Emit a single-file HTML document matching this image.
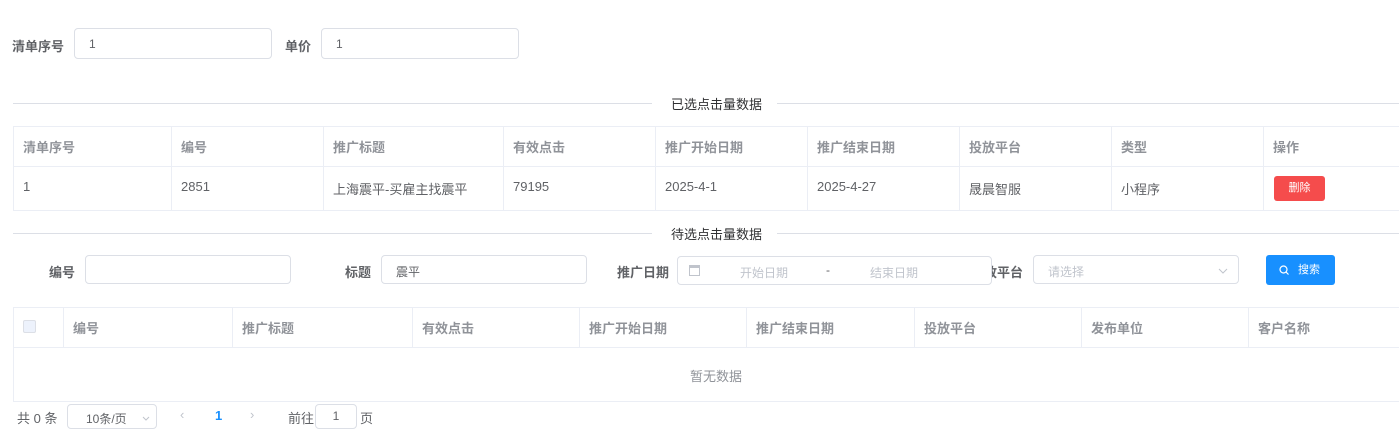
<!DOCTYPE html>
<html><head><meta charset="utf-8"><style>
*{box-sizing:border-box;margin:0;padding:0}
body{width:1399px;height:429px;overflow:hidden;background:#fff;font-family:"Liberation Sans","Noto Sans CJK SC",sans-serif;color:#606266;font-size:13px;position:relative}
.a{position:absolute}
.lbl{position:absolute;font-weight:bold;color:#606266;font-size:13px}
.inp{position:absolute;border:1px solid #dcdfe6;border-radius:4px;background:#fff;font-size:12px;color:#606266}
.hl{position:absolute;height:1px;background:#dcdfe6}
.vl{position:absolute;width:1px;background:#ebeef5}
.t{position:absolute;font-size:13px}
.th{color:#909399;font-weight:bold}
</style></head><body>
<div class="lbl" style="left:12px;top:36px">清单序号</div>
<div class="inp" style="left:74px;top:28px;width:198px;height:31px;padding:8px 14px">1</div>
<div class="lbl" style="left:285px;top:36px">单价</div>
<div class="inp" style="left:321px;top:28px;width:198px;height:31px;padding:8px 14px">1</div>

<div class="hl" style="left:13px;top:103px;width:639px"></div>
<div class="hl" style="left:777px;top:103px;width:622px"></div>
<div class="t" style="left:671px;top:94px;color:#303133">已选点击量数据</div>

<!-- table1 -->
<div class="a" style="left:13px;top:126px;width:1400px;height:85px;border:1px solid #ebeef5"></div>
<div class="hl" style="left:13px;top:166px;width:1386px;background:#ebeef5"></div>
<div class="vl" style="left:171px;top:126px;height:85px"></div>
<div class="vl" style="left:323px;top:126px;height:85px"></div>
<div class="vl" style="left:503px;top:126px;height:85px"></div>
<div class="vl" style="left:655px;top:126px;height:85px"></div>
<div class="vl" style="left:807px;top:126px;height:85px"></div>
<div class="vl" style="left:959px;top:126px;height:85px"></div>
<div class="vl" style="left:1111px;top:126px;height:85px"></div>
<div class="vl" style="left:1263px;top:126px;height:85px"></div>
<div class="t th" style="left:23px;top:137px">清单序号</div>
<div class="t th" style="left:181px;top:137px">编号</div>
<div class="t th" style="left:333px;top:137px">推广标题</div>
<div class="t th" style="left:513px;top:137px">有效点击</div>
<div class="t th" style="left:665px;top:137px">推广开始日期</div>
<div class="t th" style="left:817px;top:137px">推广结束日期</div>
<div class="t th" style="left:969px;top:137px">投放平台</div>
<div class="t th" style="left:1121px;top:137px">类型</div>
<div class="t th" style="left:1273px;top:137px">操作</div>
<div class="t" style="left:23px;top:179px">1</div>
<div class="t" style="left:181px;top:179px">2851</div>
<div class="t" style="left:333px;top:179px">上海震平-买雇主找震平</div>
<div class="t" style="left:513px;top:179px">79195</div>
<div class="t" style="left:665px;top:179px">2025-4-1</div>
<div class="t" style="left:817px;top:179px">2025-4-27</div>
<div class="t" style="left:969px;top:179px">晟晨智服</div>
<div class="t" style="left:1121px;top:179px">小程序</div>
<div class="a" style="left:1274px;top:176px;width:51px;height:25px;background:#f54c4c;border-radius:3px;color:#fff;font-size:11px;text-align:center;line-height:25px">删除</div>

<div class="hl" style="left:13px;top:233px;width:639px"></div>
<div class="hl" style="left:777px;top:233px;width:622px"></div>
<div class="t" style="left:671px;top:224px;color:#303133">待选点击量数据</div>

<!-- filters -->
<div class="lbl" style="left:49px;top:262px">编号</div>
<div class="inp" style="left:85px;top:255px;width:206px;height:29px"></div>
<div class="lbl" style="left:345px;top:262px">标题</div>
<div class="inp" style="left:381px;top:255px;width:206px;height:29px;padding:7px 14px">震平</div>
<div class="lbl" style="left:617px;top:262px">推广日期</div>
<div class="lbl" style="left:971px;top:262px">投放平台</div>
<div class="inp" style="left:677px;top:256px;width:315px;height:29px;color:#c0c4cc">
<div class="a" style="left:11px;top:8px;width:11px;height:11px;border:1px solid #c0c4cc;border-top-width:3px"></div>
<div class="a" style="left:62px;top:7px">开始日期</div>
<div class="a" style="left:148px;top:6px;color:#606266">-</div>
<div class="a" style="left:192px;top:7px">结束日期</div>
</div>
<div class="inp" style="left:1033px;top:255px;width:206px;height:29px;padding:7px 14px;color:#c0c4cc">请选择
<svg class="a" style="left:184px;top:12px" width="10" height="7"><path d="M1 1 L5 5 L9 1" stroke="#c0c4cc" fill="none"/></svg></div>
<div class="a" style="left:1266px;top:255px;width:69px;height:30px;background:#1890ff;border-radius:3px;color:#fff;font-size:11px;line-height:30px;padding-left:13px">
<svg class="a" style="left:13px;top:10px" width="10" height="10"><circle cx="4.5" cy="4.5" r="3.5" stroke="#fff" fill="none" stroke-width="1.2"/><path d="M7 7 L9.5 9.5" stroke="#fff" stroke-width="1.2"/></svg>
<span style="margin-left:19px">搜索</span></div>

<!-- table2 -->
<div class="a" style="left:13px;top:307px;width:1400px;height:95px;border:1px solid #ebeef5"></div>
<div class="hl" style="left:13px;top:347px;width:1386px;background:#ebeef5"></div>
<div class="vl" style="left:63px;top:307px;height:40px"></div>
<div class="vl" style="left:232px;top:307px;height:40px"></div>
<div class="vl" style="left:412px;top:307px;height:40px"></div>
<div class="vl" style="left:579px;top:307px;height:40px"></div>
<div class="vl" style="left:746px;top:307px;height:40px"></div>
<div class="vl" style="left:914px;top:307px;height:40px"></div>
<div class="vl" style="left:1081px;top:307px;height:40px"></div>
<div class="vl" style="left:1248px;top:307px;height:40px"></div>
<div class="a" style="left:23px;top:320px;width:13px;height:13px;border:1px solid #dcdfe6;border-radius:2px;background:#edf2fc"></div>
<div class="t th" style="left:73px;top:318px">编号</div>
<div class="t th" style="left:242px;top:318px">推广标题</div>
<div class="t th" style="left:422px;top:318px">有效点击</div>
<div class="t th" style="left:589px;top:318px">推广开始日期</div>
<div class="t th" style="left:756px;top:318px">推广结束日期</div>
<div class="t th" style="left:924px;top:318px">投放平台</div>
<div class="t th" style="left:1091px;top:318px">发布单位</div>
<div class="t th" style="left:1258px;top:318px">客户名称</div>
<div class="t" style="left:690px;top:366px;color:#909399">暂无数据</div>

<!-- pagination -->
<div class="t" style="left:17px;top:408px">共 0 条</div>
<div class="inp" style="left:67px;top:404px;width:90px;height:25px;padding:5px 18px">10条/页
<svg class="a" style="left:74px;top:11px" width="8" height="6"><path d="M1 1 L4 4 L7 1" stroke="#c0c4cc" fill="none"/></svg></div>
<div class="t" style="left:180px;top:407px;color:#c0c4cc">‹</div>
<div class="t" style="left:215px;top:408px;color:#1890ff;font-weight:bold">1</div>
<div class="t" style="left:250px;top:407px;color:#c0c4cc">›</div>
<div class="t" style="left:288px;top:408px">前往</div>
<div class="inp" style="left:315px;top:404px;width:42px;height:25px;text-align:center;line-height:23px">1</div>
<div class="t" style="left:360px;top:408px">页</div>
</body></html>
